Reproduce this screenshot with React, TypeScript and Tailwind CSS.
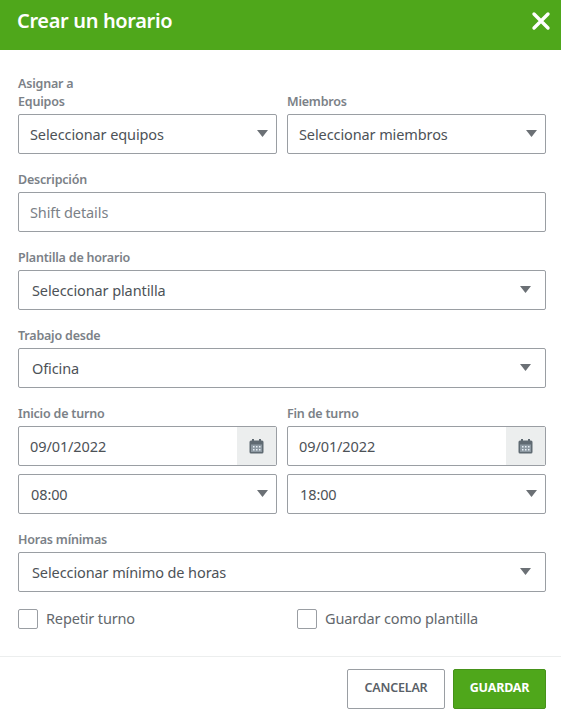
const font = { fontFamily: '"Noto Sans", sans-serif' };

function Caret({ full }: { full?: boolean }) {
  return (
    <svg width="11" height="7" viewBox="0 0 11 7" className={`absolute top-[15px] ${full ? "right-[14px]" : "right-[8px]"}`}>
      <path d="M0 0H11L5.5 7Z" fill="#6b7075" />
    </svg>
  );
}

function Label({ children }: { children: React.ReactNode }) {
  return <div className="h-[18px] text-[12.5px] leading-[18px] font-semibold tracking-[-0.2px] text-[#7b8187]">{children}</div>;
}

function Select({ text, pad = "pl-[11px]", full }: { text: string; pad?: string; full?: boolean }) {
  return (
    <div className={`relative flex h-10 items-center rounded-[2px] border border-[#9a9ea3] bg-white pt-[1px] text-[14.5px] tracking-[-0.1px] text-[#4d5257] ${pad}`}>
      {text}
      <Caret full={full} />
    </div>
  );
}

function DateField() {
  return (
    <div className="flex h-10 items-center rounded-[2px] border border-[#9a9ea3] bg-white text-[14.5px] tracking-[-0.1px] text-[#4d5257]">
      <span className="flex-1 pl-[11px] pt-[1px]">09/01/2022</span>
      <span className="flex h-full w-[39px] items-center justify-center bg-[#eceeee]">
        <svg width="15" height="15" viewBox="0 0 15 15">
          <rect x="0.5" y="1.5" width="14" height="13" rx="1.5" fill="#5f6a72" />
          <rect x="3" y="0" width="2" height="3" fill="#5f6a72" />
          <rect x="10" y="0" width="2" height="3" fill="#5f6a72" />
          <rect x="2" y="5.5" width="11" height="7.5" fill="#8d99a2" />
          <path d="M4 7h1.5v1.5H4zM7 7h1.5v1.5H7zM10 7h1.5v1.5H10zM4 10h1.5v1.5H4zM7 10h1.5v1.5H7zM10 10h1.5v1.5H10z" fill="#e8f0f6" />
        </svg>
      </span>
    </div>
  );
}

function Check({ text }: { text: string }) {
  return (
    <div className="flex items-center gap-2">
      <span className="h-5 w-5 rounded-[2px] border border-[#9a9ea3] bg-white" />
      <span className="text-[14.5px] tracking-[-0.15px] text-[#63686d]">{text}</span>
    </div>
  );
}

export default function App() {
  return (
    <div className="h-[719px] w-[561px] overflow-hidden bg-white" style={font}>
      <div className="flex h-[50px] items-center justify-between bg-[#4fa71b] pb-[8px] pl-[17px] pr-[10px]">
        <h1 className="text-[20px] font-semibold tracking-[-0.35px] text-white">Crear un horario</h1>
        <svg width="20" height="20" viewBox="0 0 20 20" className="mt-[-1px]">
          <path d="M3 3L17 17M17 3L3 17" stroke="#fff" strokeWidth="3.4" strokeLinecap="round" />
        </svg>
      </div>

      <div className="pl-[18px] pr-[15px] pt-[25px]">
        <Label>Asignar a</Label>
        <div className="grid grid-cols-2 gap-x-[10px]">
          <div>
            <div className="mb-[3px]"><Label>Equipos</Label></div>
            <Select text="Seleccionar equipos" />
          </div>
          <div>
            <div className="mb-[3px]"><Label>Miembros</Label></div>
            <Select text="Seleccionar miembros" />
          </div>
        </div>

        <div className="mt-[17px]">
          <div className="mb-[3px]"><Label>Descripción</Label></div>
          <div className="flex h-10 items-center rounded-[2px] border border-[#9a9ea3] pl-[11px] pt-[1px] text-[14.5px] tracking-[-0.1px] text-[#7b8187]">Shift details</div>
        </div>

        <div className="mt-[17px]">
          <div className="mb-[3px]"><Label>Plantilla de horario</Label></div>
          <Select text="Seleccionar plantilla" pad="pl-[13px]" full />
        </div>

        <div className="mt-[17px]">
          <div className="mb-[3px]"><Label>Trabajo desde</Label></div>
          <Select text="Oficina" pad="pl-[13px]" full />
        </div>

        <div className="mt-[17px] grid grid-cols-2 gap-x-[10px] gap-y-2">
          <div>
            <div className="mb-[3px]"><Label>Inicio de turno</Label></div>
            <DateField />
          </div>
          <div>
            <div className="mb-[3px]"><Label>Fin de turno</Label></div>
            <DateField />
          </div>
          <Select text="08:00" pad="pl-[12px]" />
          <Select text="18:00" pad="pl-[12px]" />
        </div>

        <div className="mt-[17px]">
          <div className="mb-[3px]"><Label>Horas mínimas</Label></div>
          <Select text="Seleccionar mínimo de horas" pad="pl-[13px]" full />
        </div>

        <div className="mt-4 grid grid-cols-2 gap-x-[10px]">
          <Check text="Repetir turno" />
          <div className="pl-[10px]"><Check text="Guardar como plantilla" /></div>
        </div>
      </div>

      <div className="mt-[26px] flex justify-end gap-2 border-t border-[#eceeee] pr-[15px] pt-3">
        <button className="h-10 w-[98px] rounded-[2px] border border-[#9a9ea3] bg-white text-[12.5px] font-semibold tracking-[-0.2px] text-[#596067]">CANCELAR</button>
        <button className="h-10 w-[93px] rounded-[2px] border border-[#46921a] bg-[#4fa71b] text-[12.5px] font-bold tracking-[-0.2px] text-white">GUARDAR</button>
      </div>
    </div>
  );
}
